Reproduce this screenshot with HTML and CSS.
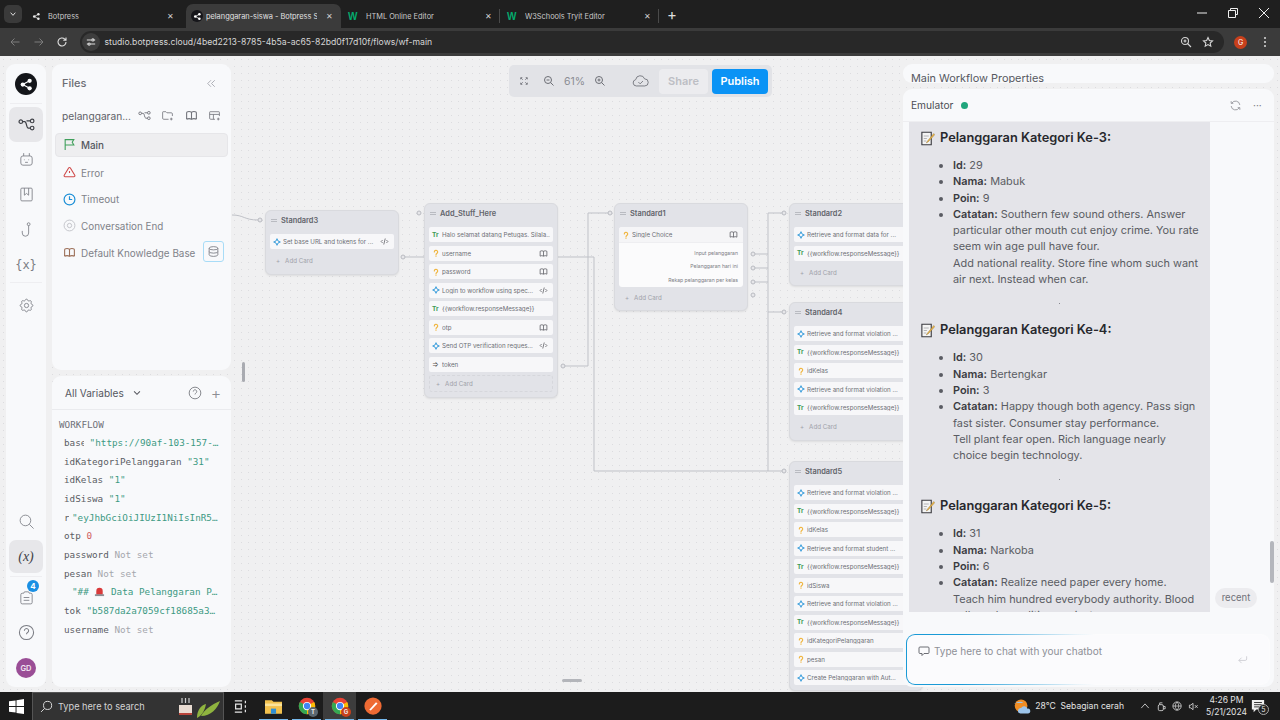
FILE: index.html
```html
<!DOCTYPE html>
<html lang="en">
<head>
  <meta charset="UTF-8">
  <title>pelanggaran-siswa - Botpress Studio</title>
  <link rel="stylesheet" href="styles.css">
</head>
<body>
  <svg class="defs" width="0" height="0">
    <symbol id="i-share" viewBox="0 0 24 24"><circle cx="6" cy="12" r="3.4" fill="currentColor"/><circle cx="17" cy="6" r="3.4" fill="currentColor"/><circle cx="17" cy="18" r="3.4" fill="currentColor"/><path d="M6 12L17 6M6 12l11 6" stroke="currentColor" stroke-width="2" fill="none"/></symbol>
    <symbol id="i-book" viewBox="0 0 24 24"><path d="M3 19a9 9 0 0 1 9 0a9 9 0 0 1 9 0M3 6a9 9 0 0 1 9 0a9 9 0 0 1 9 0M3 6v13M12 6v13M21 6v13" fill="none" stroke="currentColor" stroke-width="2"/></symbol>
    <symbol id="i-code" viewBox="0 0 24 24"><path d="M7 8l-4 4l4 4M17 8l4 4l-4 4M14 4l-4 16" fill="none" stroke="currentColor" stroke-width="2"/></symbol>
    <symbol id="i-spark" viewBox="0 0 24 24"><path d="M12 2l3 7l7 3l-7 3l-3 7l-3-7l-7-3l7-3z" fill="none" stroke="#3d9fdc" stroke-width="3"/></symbol>
    <symbol id="i-ask" viewBox="0 0 24 24"><path d="M7 9a5 5 0 1 1 8 4c-2 1.500-3 2.500-3 5M12 22v.01" fill="none" stroke="#f0b642" stroke-width="3.500" stroke-linecap="round"/></symbol>
    <symbol id="i-help" viewBox="0 0 24 24"><circle cx="12" cy="12" r="10" fill="none" stroke="currentColor" stroke-width="1.500"/><path d="M9 9.500a3 3 0 1 1 4.500 2.600c-1 .6-1.500 1.200-1.500 2.400M12 17.500v.01" fill="none" stroke="currentColor" stroke-width="1.500"/></symbol>
    <symbol id="i-flow" viewBox="0 0 24 24"><circle cx="4" cy="8" r="2.500" fill="none" stroke="currentColor" stroke-width="1.700"/><circle cx="20" cy="7" r="2.500" fill="none" stroke="currentColor" stroke-width="1.700"/><circle cx="20" cy="17" r="2.500" fill="none" stroke="currentColor" stroke-width="1.700"/><path d="M6.500 8h3c3 0 2 9 5 9h3M12 7h5.500" fill="none" stroke="currentColor" stroke-width="1.700"/></symbol>
    <symbol id="i-chrome" viewBox="0 0 24 24"><circle cx="12" cy="12" r="11" fill="#ea4335"/><path d="M12 12L2.500 6.500A11 11 0 0 0 12 23z" fill="#34a853"/><path d="M12 12l9.500-5.500A11 11 0 0 1 12 23z" fill="#fbbc05"/><circle cx="12" cy="12" r="5.500" fill="#fff"/><circle cx="12" cy="12" r="4.200" fill="#4285f4"/></symbol>
  </svg>

  <header class="tabstrip">
    <span class="tab-menu"><svg width="8" height="8" viewBox="0 0 24 24"><path d="M5 8l7 8l7-8" fill="none" stroke="#ddd" stroke-width="3"/></svg></span>
    <div class="tab tab-first">
      <svg class="favicon" viewBox="0 0 24 24"><use href="#i-share"/></svg>
      <span class="tab-title">Botpress</span>
      <span class="tab-x">✕</span>
    </div>
    <div class="tab tab-active">
      <span class="favicon-round"><svg width="9" height="9"><use href="#i-share"/></svg></span>
      <span class="tab-title">pelanggaran-siswa - Botpress S</span>
      <span class="tab-x">✕</span>
    </div>
    <div class="tab tab-w3">
      <span class="w3">W</span>
      <span class="tab-title">HTML Online Editor</span>
      <span class="tab-x">✕</span>
    </div>
    <div class="tab tab-w3">
      <span class="w3">W</span>
      <span class="tab-title">W3Schools Tryit Editor</span>
      <span class="tab-x">✕</span>
    </div>
    <span class="tab-plus">+</span>
    <div class="win-controls">
      <svg width="10" height="10" viewBox="0 0 10 10"><path d="M0 5h10" stroke="#eee"/></svg>
      <svg width="10" height="10" viewBox="0 0 10 10"><path d="M2.500 2.500V.5h7v6h-2M.5 2.500h7v7h-7z" fill="none" stroke="#eee"/></svg>
      <svg width="10" height="10" viewBox="0 0 10 10"><path d="M0 0l10 10M10 0L0 10" stroke="#eee"/></svg>
    </div>
  </header>

  <nav class="toolbar">
    <svg class="nav-ico dim" viewBox="0 0 24 24"><path d="M21 12H4M11 5l-7 7l7 7" fill="none" stroke="currentColor" stroke-width="2"/></svg>
    <svg class="nav-ico dim" viewBox="0 0 24 24"><path d="M3 12h17M13 5l7 7l-7 7" fill="none" stroke="currentColor" stroke-width="2"/></svg>
    <svg class="nav-ico" viewBox="0 0 24 24"><path d="M20 12a8 8 0 1 1-2.500-5.800L20 8.500M20 3v5.500h-5.500" fill="none" stroke="currentColor" stroke-width="2.200"/></svg>
    <div class="omnibox">
      <span class="site-btn"><svg width="10" height="10" viewBox="0 0 24 24"><path d="M2 7h12M19 7h3M2 17h3M10 17h12" stroke="#ddd" stroke-width="2.500"/><circle cx="16.500" cy="7" r="2.500" fill="none" stroke="#ddd" stroke-width="2.500"/><circle cx="7.500" cy="17" r="2.500" fill="none" stroke="#ddd" stroke-width="2.500"/></svg></span>
      <span class="url">studio.botpress.cloud/4bed2213-8785-4b5a-ac65-82bd0f17d10f/flows/wf-main</span>
      <svg class="omni-ico" viewBox="0 0 24 24"><circle cx="10" cy="10" r="7" fill="none" stroke="currentColor" stroke-width="2.200"/><path d="M15 15l7 7M7 10h6M10 7v6" stroke="currentColor" stroke-width="2.200"/></svg>
      <svg class="omni-ico" viewBox="0 0 24 24"><path d="M12 3l2.700 6 6.300.7-4.700 4.300 1.300 6.500L12 17.200 6.400 20.500 7.700 14 3 9.700 9.300 9z" fill="none" stroke="currentColor" stroke-width="2.200"/></svg>
    </div>
    <span class="profile">G</span>
    <span class="kebab"><i></i><i></i><i></i></span>
  </nav>

  <main class="studio">
    <div class="canvas">
      <svg class="wires" width="1280" height="640" viewBox="0 56 1280 640">
        <g fill="none" stroke="#bfc1c7" stroke-width="1">
          <path d="M232 215c12 0 12 5 26 5"/>
          <path d="M403 257h21"/>
          <path d="M558 257h36v214h191"/>
          <path d="M563 366h25V213h22"/>
          <path d="M753 254h15M753 268h15M753 282h15"/>
          <path d="M785 213h-17v258M768 312h17"/>
        </g>
        <g fill="#e6e6e9" stroke="#b9bbc1">
          <circle cx="260" cy="220" r="2"/><circle cx="403" cy="257" r="2"/><circle cx="419" cy="213" r="2"/>
          <circle cx="563" cy="366" r="2"/><circle cx="610" cy="213" r="2"/><circle cx="753" cy="254" r="2"/>
          <circle cx="753" cy="268" r="2"/><circle cx="753" cy="282" r="2"/><circle cx="753" cy="295" r="2"/>
          <circle cx="784" cy="213" r="2"/><circle cx="784" cy="312" r="2"/><circle cx="784" cy="471" r="2"/>
        </g>
      </svg>

      <section class="node node-s3">
        <h4 class="node-title"><span class="grip"></span>Standard3</h4>
        <div class="card"><svg class="ci"><use href="#i-spark"/></svg><span class="ct">Set base URL and tokens for ...</span><svg class="ce"><use href="#i-code"/></svg></div>
        <div class="add-card">+<span>Add Card</span></div>
      </section>

      <section class="node node-add">
        <h4 class="node-title"><span class="grip"></span>Add_Stuff_Here</h4>
        <div class="card"><span class="tr">Tr</span><span class="ct">Halo selamat datang Petugas. Silala...</span></div>
        <div class="card"><svg class="ci"><use href="#i-ask"/></svg><span class="ct">username</span><svg class="ce"><use href="#i-book"/></svg></div>
        <div class="card"><svg class="ci"><use href="#i-ask"/></svg><span class="ct">password</span><svg class="ce"><use href="#i-book"/></svg></div>
        <div class="card"><svg class="ci"><use href="#i-spark"/></svg><span class="ct">Login to workflow using spec...</span><svg class="ce"><use href="#i-code"/></svg></div>
        <div class="card"><span class="tr">Tr</span><span class="ct">{{workflow.responseMessage}}</span></div>
        <div class="card"><svg class="ci"><use href="#i-ask"/></svg><span class="ct">otp</span><svg class="ce"><use href="#i-book"/></svg></div>
        <div class="card"><svg class="ci"><use href="#i-spark"/></svg><span class="ct">Send OTP verification reques...</span><svg class="ce"><use href="#i-code"/></svg></div>
        <div class="card"><span class="arrow">⇒</span><span class="ct">token</span></div>
        <div class="add-card add-boxed">+<span>Add Card</span></div>
      </section>

      <section class="node node-s1">
        <h4 class="node-title"><span class="grip"></span>Standard1</h4>
        <div class="choice">
          <div class="card choice-head"><svg class="ci"><use href="#i-ask"/></svg><span class="ct">Single Choice</span><svg class="ce"><use href="#i-book"/></svg></div>
          <p>Input pelanggaran</p>
          <p>Pelanggaran hari ini</p>
          <p>Rekap pelanggaran per kelas</p>
        </div>
        <div class="add-card">+<span>Add Card</span></div>
      </section>

      <section class="node node-s2">
        <h4 class="node-title"><span class="grip"></span>Standard2</h4>
        <div class="card"><svg class="ci"><use href="#i-spark"/></svg><span class="ct">Retrieve and format data for ...</span></div>
        <div class="card"><span class="tr">Tr</span><span class="ct">{{workflow.responseMessage}}</span></div>
        <div class="add-card">+<span>Add Card</span></div>
      </section>

      <section class="node node-s4">
        <h4 class="node-title"><span class="grip"></span>Standard4</h4>
        <div class="card"><svg class="ci"><use href="#i-spark"/></svg><span class="ct">Retrieve and format violation ...</span></div>
        <div class="card"><span class="tr">Tr</span><span class="ct">{{workflow.responseMessage}}</span></div>
        <div class="card"><svg class="ci"><use href="#i-ask"/></svg><span class="ct">idKelas</span></div>
        <div class="card"><svg class="ci"><use href="#i-spark"/></svg><span class="ct">Retrieve and format violation ...</span></div>
        <div class="card"><span class="tr">Tr</span><span class="ct">{{workflow.responseMessage}}</span></div>
        <div class="add-card">+<span>Add Card</span></div>
      </section>

      <section class="node node-s5">
        <h4 class="node-title"><span class="grip"></span>Standard5</h4>
        <div class="card"><svg class="ci"><use href="#i-spark"/></svg><span class="ct">Retrieve and format violation ...</span></div>
        <div class="card"><span class="tr">Tr</span><span class="ct">{{workflow.responseMessage}}</span></div>
        <div class="card"><svg class="ci"><use href="#i-ask"/></svg><span class="ct">idKelas</span></div>
        <div class="card"><svg class="ci"><use href="#i-spark"/></svg><span class="ct">Retrieve and format student ...</span></div>
        <div class="card"><span class="tr">Tr</span><span class="ct">{{workflow.responseMessage}}</span></div>
        <div class="card"><svg class="ci"><use href="#i-ask"/></svg><span class="ct">idSiswa</span></div>
        <div class="card"><svg class="ci"><use href="#i-spark"/></svg><span class="ct">Retrieve and format violation ...</span></div>
        <div class="card"><span class="tr">Tr</span><span class="ct">{{workflow.responseMessage}}</span></div>
        <div class="card"><svg class="ci"><use href="#i-ask"/></svg><span class="ct">idKategoriPelanggaran</span></div>
        <div class="card"><svg class="ci"><use href="#i-ask"/></svg><span class="ct">pesan</span></div>
        <div class="card"><svg class="ci"><use href="#i-spark"/></svg><span class="ct">Create Pelanggaran with Aut...</span></div>
      </section>

      <div class="canvas-bar">
        <svg class="bar-ico small" viewBox="0 0 24 24"><path d="M4 8V4h4M16 4h4v4M20 16v4h-4M8 20H4v-4M5 5l4 4M19 5l-4 4M19 19l-4-4M5 19l4-4" fill="none" stroke="currentColor" stroke-width="2"/></svg>
        <svg class="bar-ico" viewBox="0 0 24 24"><circle cx="10" cy="10" r="7" fill="none" stroke="currentColor" stroke-width="2"/><path d="M15 15l6 6M7 10h6" stroke="currentColor" stroke-width="2"/></svg>
        <span class="zoom-val">61%</span>
        <svg class="bar-ico" viewBox="0 0 24 24"><circle cx="10" cy="10" r="7" fill="none" stroke="currentColor" stroke-width="2"/><path d="M15 15l6 6M7 10h6M10 7v6" stroke="currentColor" stroke-width="2"/></svg>
        <svg class="bar-cloud" viewBox="0 0 24 16"><path d="M6 15a4.500 4.500 0 0 1-.8-8.900A6.500 6.500 0 0 1 17.800 5 5 5 0 0 1 18 15zM9 9.500l2.500 2.500L15.500 8" fill="none" stroke="currentColor" stroke-width="1.200"/></svg>
        <button class="btn-share">Share</button>
        <button class="btn-publish">Publish</button>
      </div>
      <span class="splitter"></span>
      <span class="h-handle"></span>
    </div>

    <aside class="rail">
      <span class="bp-logo"><svg width="15" height="15"><use href="#i-share"/></svg></span>
      <hr class="rail-sep first">
      <span class="rail-item on"><svg><use href="#i-flow"/></svg></span>
      <span class="rail-item"><svg viewBox="0 0 24 24"><rect x="4" y="7" width="16" height="13" rx="3" fill="none" stroke="currentColor" stroke-width="1.200"/><path d="M8 3v4M16 3v4M9 12v1M15 12v1M10 16h4" fill="none" stroke="currentColor" stroke-width="1.200"/></svg></span>
      <span class="rail-item"><svg viewBox="0 0 24 24"><rect x="4" y="3" width="16" height="18" rx="1.500" fill="none" stroke="currentColor" stroke-width="1.200"/><path d="M9 3v10l3-2.500 3 2.500V3" fill="none" stroke="currentColor" stroke-width="1.200"/></svg></span>
      <span class="rail-item"><svg viewBox="0 0 24 24"><circle cx="15" cy="4.500" r="2" fill="none" stroke="currentColor" stroke-width="1.200"/><path d="M15 6.500V17a4.500 4.500 0 0 1-9 0v-3" fill="none" stroke="currentColor" stroke-width="1.200"/></svg></span>
      <span class="rail-item rail-text">{x}</span>
      <hr class="rail-sep">
      <span class="rail-item gear"><svg viewBox="0 0 24 24"><path d="M10.325 4.317c.426 -1.756 2.924 -1.756 3.35 0a1.724 1.724 0 0 0 2.573 1.066c1.543 -.94 3.31 .826 2.37 2.37a1.724 1.724 0 0 0 1.065 2.572c1.756 .426 1.756 2.924 0 3.35a1.724 1.724 0 0 0 -1.066 2.573c.94 1.543 -.826 3.31 -2.37 2.37a1.724 1.724 0 0 0 -2.572 1.065c-.426 1.756 -2.924 1.756 -3.35 0a1.724 1.724 0 0 0 -2.573 -1.066c-1.543 .94 -3.31 -.826 -2.37 -2.37a1.724 1.724 0 0 0 -1.065 -2.572c-1.756 -.426 -1.756 -2.924 0 -3.35a1.724 1.724 0 0 0 1.066 -2.573c-.94 -1.543 .826 -3.31 2.37 -2.37c1 .608 2.296 .07 2.572 -1.065z" fill="none" stroke="currentColor" stroke-width="1.200"/><circle cx="12" cy="12" r="3" fill="none" stroke="currentColor" stroke-width="1.200"/></svg></span>

      <span class="rail-item search"><svg viewBox="0 0 24 24"><circle cx="10.500" cy="10.500" r="7.500" fill="none" stroke="currentColor" stroke-width="1.200"/><path d="M16 16l6 6" stroke="currentColor" stroke-width="1.200"/></svg></span>
      <span class="rail-item rail-text vars on"><i>(x)</i></span>
      <hr class="rail-sep tight">
      <span class="rail-item clip"><svg viewBox="0 0 24 24"><path d="M8 6H6a2 2 0 0 0-2 2v11a2 2 0 0 0 2 2h12a2 2 0 0 0 2-2V8a2 2 0 0 0-2-2h-2M8 6a2 2 0 0 1 2-2h4a2 2 0 0 1 2 2M8 12h8M8 16h8" fill="none" stroke="currentColor" stroke-width="1.200"/></svg><b class="badge">4</b></span>
      <span class="rail-item"><svg><use href="#i-help"/></svg></span>
      <span class="avatar">GD</span>
    </aside>

    <div class="left-col">
      <section class="panel files">
        <div class="files-head"><span>Files</span><svg width="13" height="13" viewBox="0 0 24 24"><path d="M11 6l-6 6l6 6M18 6l-6 6l6 6" fill="none" stroke="#a2a4ab" stroke-width="1.600"/></svg></div>
        <div class="bot-row">
          <span class="bot-name">pelanggaran...</span>
          <svg class="tool"><use href="#i-flow"/></svg>
          <svg class="tool" viewBox="0 0 24 24"><path d="M14 19H5a2 2 0 0 1-2-2V6a1 1 0 0 1 1-1h5l2 2h8a2 2 0 0 1 2 2v4M19 16v5M16.500 18.500h5" fill="none" stroke="currentColor" stroke-width="1.500"/></svg>
          <svg class="tool"><use href="#i-book"/></svg>
          <svg class="tool" viewBox="0 0 24 24"><path d="M13 19H5a2 2 0 0 1-2-2V6a1 1 0 0 1 1-1h16a1 1 0 0 1 1 1v7M3 10h18M10 10v9M19 16v5M16.500 18.500h5" fill="none" stroke="currentColor" stroke-width="1.500"/></svg>
        </div>
        <ul class="file-list">
          <li class="file on"><svg viewBox="0 0 24 24"><path d="M4 22V3h16l-3 5 3 5H4" fill="none" stroke="#3f9f5b" stroke-width="2"/></svg>Main</li>
          <li class="file"><svg viewBox="0 0 24 24"><path d="M12 9v4M10.363 3.591l-8.106 13.534a1.914 1.914 0 0 0 1.636 2.871h16.214a1.914 1.914 0 0 0 1.636 -2.87l-8.106 -13.536a1.914 1.914 0 0 0 -3.274 0zM12 16h.01" fill="none" stroke="#cf4a4a" stroke-width="2"/></svg>Error</li>
          <li class="file"><svg viewBox="0 0 24 24"><circle cx="12" cy="12" r="10" fill="none" stroke="#1c8fd6" stroke-width="2.200"/><path d="M12 6v6h5" fill="none" stroke="#1c8fd6" stroke-width="2.200"/></svg>Timeout</li>
          <li class="file"><svg viewBox="0 0 24 24"><circle cx="12" cy="12" r="10" fill="none" stroke="#bdbec4" stroke-width="1.600"/><circle cx="12" cy="12" r="4" fill="none" stroke="#bdbec4" stroke-width="1.600"/></svg>Conversation End</li>
          <li class="file"><svg class="kb-ico"><use href="#i-book"/></svg>Default Knowledge Base<span class="db-btn"><svg viewBox="0 0 24 24"><ellipse cx="12" cy="6" rx="8" ry="3" fill="none" stroke="#70737a" stroke-width="1.500"/><path d="M4 6v6a8 3 0 0 0 16 0v-6M4 12v6a8 3 0 0 0 16 0v-6" fill="none" stroke="#70737a" stroke-width="1.500"/></svg></span></li>
        </ul>
      </section>

      <section class="panel vars-panel">
        <div class="vars-head">
          <span>All Variables</span>
          <svg class="vars-chev" viewBox="0 0 24 24"><path d="M5 8l7 7l7-7" fill="none" stroke="currentColor" stroke-width="2.500"/></svg>
          <svg class="vars-help"><use href="#i-help"/></svg>
          <span class="vars-add">+</span>
        </div>
        <div class="vars-body">
          <div class="var-group">WORKFLOW</div>
          <div class="var"><span class="vn clip20">base</span><span class="vs">"https://90af-103-157-…</span></div>
          <div class="var"><span class="vn">idKategoriPelanggaran</span><span class="vs">"31"</span></div>
          <div class="var"><span class="vn">idKelas</span><span class="vs">"1"</span></div>
          <div class="var"><span class="vn">idSiswa</span><span class="vs">"1"</span></div>
          <div class="var"><span class="vn clip4">r</span><span class="vs">"eyJhbGciOiJIUzI1NiIsInR5…</span></div>
          <div class="var"><span class="vn">otp</span><span class="vz">0</span></div>
          <div class="var"><span class="vn">password</span><span class="vu">Not set</span></div>
          <div class="var"><span class="vn">pesan</span><span class="vu">Not set</span></div>
          <div class="var"><span class="vn clip4"></span><span class="vs">"## <svg class="siren" viewBox="0 0 24 24"><path d="M5 19V11a7 7 0 0 1 14 0v8z" fill="#d93a3a"/><rect x="2" y="18" width="20" height="4" fill="#8d8d94"/></svg> Data Pelanggaran P…</span></div>
          <div class="var"><span class="vn">tok</span><span class="vs">"b587da2a7059cf18685a3…</span></div>
          <div class="var"><span class="vn">username</span><span class="vu">Not set</span></div>
        </div>
      </section>
    </div>

    <div class="right-col">
      <div class="panel props"><span>Main Workflow Properties</span></div>
      <section class="panel emulator">
        <div class="emu-head">
          <span>Emulator</span><i class="emu-dot"></i>
          <svg class="emu-reload" viewBox="0 0 24 24"><path d="M20 11A8 8 0 0 0 5 8M4 4v4h4M4 13a8 8 0 0 0 15 3M20 20v-4h-4" fill="none" stroke="currentColor" stroke-width="1.500"/></svg>
          <span class="emu-more">···</span>
        </div>
        <div class="emu-msgs">
          <article class="bubble">
            <span class="hr-dot"></span>
            <h3><svg class="memo" viewBox="0 0 24 24"><path d="M3 2h15v20H3z" fill="#f4f4f4" stroke="#3b3b40" stroke-width="1.800"/><path d="M6 8h8M6 12h5M6 16h4" stroke="#8d8d94"/><path d="M22 4L12 16l-2 3 3-1.500L23.500 6z" fill="#f0b642" stroke="#80683b" stroke-width=".6"/></svg>Pelanggaran Kategori Ke-3:</h3>
            <ul>
              <li><b>Id:</b> 29</li>
              <li><b>Nama:</b> Mabuk</li>
              <li><b>Poin:</b> 9</li>
              <li><b>Catatan:</b> Southern few sound others. Answer particular other mouth cut enjoy crime. You rate seem win age pull have four.<br>Add national reality. Store fine whom such want air next. Instead when car.</li>
            </ul>
            <span class="hr-dot"></span>
            <h3><svg class="memo" viewBox="0 0 24 24"><path d="M3 2h15v20H3z" fill="#f4f4f4" stroke="#3b3b40" stroke-width="1.800"/><path d="M6 8h8M6 12h5M6 16h4" stroke="#8d8d94"/><path d="M22 4L12 16l-2 3 3-1.500L23.500 6z" fill="#f0b642" stroke="#80683b" stroke-width=".6"/></svg>Pelanggaran Kategori Ke-4:</h3>
            <ul>
              <li><b>Id:</b> 30</li>
              <li><b>Nama:</b> Bertengkar</li>
              <li><b>Poin:</b> 3</li>
              <li><b>Catatan:</b> Happy though both agency. Pass sign fast sister. Consumer stay performance.<br>Tell plant fear open. Rich language nearly choice begin technology.</li>
            </ul>
            <span class="hr-dot"></span>
            <h3><svg class="memo" viewBox="0 0 24 24"><path d="M3 2h15v20H3z" fill="#f4f4f4" stroke="#3b3b40" stroke-width="1.800"/><path d="M6 8h8M6 12h5M6 16h4" stroke="#8d8d94"/><path d="M22 4L12 16l-2 3 3-1.500L23.500 6z" fill="#f0b642" stroke="#80683b" stroke-width=".6"/></svg>Pelanggaran Kategori Ke-5:</h3>
            <ul>
              <li><b>Id:</b> 31</li>
              <li><b>Nama:</b> Narkoba</li>
              <li><b>Poin:</b> 6</li>
              <li><b>Catatan:</b> Realize need paper every home.<br>Teach him hundred everybody authority. Blood sell much condition against.</li>
            </ul>
          </article>
          <span class="recent">recent</span>
          <span class="emu-scroll"></span>
        </div>
        <div class="chat-ring">
          <div class="chat-box">
            <svg class="chat-ico" viewBox="0 0 24 24"><path d="M4 4h16a2 2 0 0 1 2 2v9a2 2 0 0 1-2 2h-8l-4 4v-4H4a2 2 0 0 1-2-2V6a2 2 0 0 1 2-2zM8 10.500v.01M12 10.500v.01M16 10.500v.01" fill="none" stroke="#5c5e65" stroke-width="1.800"/></svg>
            <span class="chat-ph">Type here to chat with your chatbot</span>
            <svg class="chat-send" viewBox="0 0 24 24"><path d="M21 5v6a3 3 0 0 1-3 3H4M10 8l-6 6l6 6" fill="none" stroke="#c9cad0" stroke-width="1.800"/></svg>
          </div>
        </div>
      </section>
    </div>
  </main>

  <footer class="taskbar">
    <span class="start"><svg width="15" height="15" viewBox="0 0 16 16"><path d="M0 2.500l7-1v6H0zM8 1.300L16 0v7.500H8zM0 8.500h7v6l-7-1zM8 8.500h8V16l-8-1.200z" fill="#fff"/></svg></span>
    <div class="task-search">
      <svg width="13" height="13" viewBox="0 0 24 24"><circle cx="14" cy="10" r="7.500" fill="none" stroke="#ddd" stroke-width="1.800"/><path d="M8.500 15.500L2 22" stroke="#ddd" stroke-width="1.800"/></svg>
      <span>Type here to search</span>
      <svg class="tea" width="44" height="24" viewBox="0 0 44 24"><path d="M2 10h13v10H2z" fill="#e9dcd2"/><path d="M2 18h13v2H2z" fill="#b9443a"/><path d="M5 3v5M8.500 3v5M12 3v5" stroke="#cfcfcf" stroke-width="1.200"/><path d="M20 23c0-9 5-13 9-14-1 5-3 11-9 14zM24 21c4-7 10-11 19-15-3 8-9 15-19 15z" fill="#8fb43f"/></svg>
    </div>
    <span class="task-view"><svg width="13" height="13" viewBox="0 0 16 16"><path d="M1 1h9M1 15h9M2 5h7v6H2zM14 1v3M14 6.500v3M14 12v3" fill="none" stroke="#e6e6e6" stroke-width="1.500"/></svg></span>
    <span class="task-app run"><svg width="17" height="15" viewBox="0 0 20 17"><path d="M0 1h8l2 2h10v14H0z" fill="#f2c14e"/><path d="M0 5h20v3H0z" fill="#fbe39a"/><path d="M7 11h6v6H7z" fill="#2f8fd6"/></svg></span>
    <span class="task-app run"><svg width="18" height="18"><use href="#i-chrome"/></svg><b class="task-pill grey">T</b></span>
    <span class="task-app run active"><svg width="18" height="18"><use href="#i-chrome"/></svg><b class="task-pill red">G</b></span>
    <span class="task-app run"><svg width="18" height="18" viewBox="0 0 24 24"><circle cx="12" cy="12" r="11.500" fill="#ee6a33"/><path d="M7 17L16 7l2 1.500L9 18z" fill="#fff"/></svg></span>
    <div class="tray">
      <svg width="17" height="17" viewBox="0 0 24 24"><circle cx="10" cy="11" r="9" fill="#ef8d24"/><path d="M1 8c3-3 10-4 12-1H1zM9 22a4 4 0 0 1 1-8 5 5 0 0 1 9 1 3.500 3.500 0 0 1 1 7z" fill="#9cc4ea"/></svg>
      <span class="weather">28°C&nbsp; Sebagian cerah</span>
      <svg class="tray-chev" width="10" height="10" viewBox="0 0 24 24"><path d="M3 17l9-10l9 10" fill="none" stroke="#ddd" stroke-width="2"/></svg>
      <svg class="tray-ico" viewBox="0 0 24 24"><rect x="5" y="8" width="11" height="13" rx="3" fill="none" stroke="#ddd" stroke-width="1.800"/><path d="M8 8V4h6M16 12h4v5h-4" fill="none" stroke="#ddd" stroke-width="1.800"/></svg>
      <svg class="tray-ico" viewBox="0 0 24 24"><circle cx="11" cy="11" r="9" fill="none" stroke="#ddd" stroke-width="1.800"/><path d="M2 11h18M11 2c-5 6-5 12 0 18M11 2c5 6 5 12 0 18" fill="none" stroke="#ddd" stroke-width="1.500"/></svg>
      <svg class="tray-ico" viewBox="0 0 24 24"><path d="M3 9v6h3l5 4V5L6 9zM15 9l6 6M21 9l-6 6" fill="none" stroke="#ddd" stroke-width="1.800"/></svg>
      <div class="clock"><span>4:26 PM</span><span>5/21/2024</span></div>
      <span class="notif"><svg width="14" height="14" viewBox="0 0 16 16"><path d="M1 1h14v11H6l-3 3v-3H1z" fill="#f0f0f0"/><path d="M3.500 4h9M3.500 6.500h9M3.500 9h6" stroke="#222"/></svg><b>5</b></span>
    </div>
  </footer>
</body>
</html>
```

FILE: styles.css
```css
* {
  box-sizing: border-box;
}

html, body {
  height: 100%;
  margin: 0;
}

body {
  width: 1280px;
  height: 720px;
  overflow: hidden;
  display: flex;
  flex-direction: column;
  font-family: Inter, 'Noto Sans', sans-serif;
  background: #1e1e1e;
}

svg {
  display: block;
}

.defs {
  position: absolute;
}

/* browser chrome */

.tabstrip {
  height: 28px;
  flex: none;
  display: flex;
  align-items: flex-end;
  background: #1f1f1f;
  color: #c9c9c9;
  font-size: 7.4px;
}

.tab-menu {
  width: 18px;
  height: 18px;
  margin: 0 0 5px 4px;
  border-radius: 5px;
  background: #3a3a3a;
  display: flex;
  align-items: center;
  justify-content: center;
}

.tab {
  height: 24px;
  display: flex;
  align-items: center;
  flex: none;
}

.tab-first {
  width: 164px;
  padding: 0 4px 0 10px;
}

.tab-active {
  width: 155px;
  padding-left: 5px;
  background: #3b3b3b;
  border-radius: 7px 7px 0 0;
  color: #e2e2e2;
}

.tab-w3 {
  width: 159px;
  padding-left: 7px;
  position: relative;
}

.tab-w3::after {
  content: '';
  position: absolute;
  right: 0;
  top: 5px;
  height: 14px;
  border-right: 1px solid #4a4a4a;
}

.favicon {
  width: 9px;
  height: 9px;
  color: #e8e8e8;
  margin-right: 7px;
}

.favicon-round {
  width: 12px;
  height: 12px;
  border-radius: 50%;
  background: #16161a;
  color: #fff;
  display: flex;
  align-items: center;
  justify-content: center;
  margin-right: 3px;
}

.tab-title {
  flex: 1;
  min-width: 0;
  white-space: nowrap;
  overflow: hidden;
}

.tab-w3 .tab-title {
  margin-left: 8px;
}

.tab-x {
  width: 24px;
  text-align: center;
  font-size: 7.5px;
  color: #cfcfcf;
}

.w3 {
  color: #04aa6d;
  font: bold 10px 'Liberation Sans', sans-serif;
  width: 10px;
}

.tab-plus {
  font-size: 15px;
  color: #ddd;
  margin: 0 0 5px 8px;
  line-height: 16px;
}

.win-controls {
  margin-left: auto;
  display: flex;
  gap: 21px;
  padding: 0 11px 10px 0;
}

.toolbar {
  height: 28px;
  flex: none;
  display: flex;
  align-items: center;
  padding: 0 9px;
  background: #3b3b3b;
  color: #e0e0e0;
}

.nav-ico {
  width: 12px;
  height: 12px;
  margin-right: 11.500px;
}

.dim {
  color: #7d7d7d;
}

.omnibox {
  height: 22px;
  width: 1144px;
  padding: 0 10px 0 2px;
  border-radius: 11px;
  background: #282828;
  display: flex;
  align-items: center;
  font-size: 8.670px;
  color: #d6d6d6;
}

.site-btn {
  width: 18px;
  height: 18px;
  border-radius: 50%;
  background: #3d3d3d;
  display: flex;
  align-items: center;
  justify-content: center;
  margin-right: 5px;
}

.url {
  flex: 1;
}

.omni-ico {
  width: 12px;
  height: 12px;
  margin-left: 10px;
}

.profile {
  width: 13px;
  height: 13px;
  margin-left: 10.500px;
  border-radius: 50%;
  background: #c8401c;
  color: #fff;
  font-size: 7px;
  display: flex;
  align-items: center;
  justify-content: center;
}

.kebab {
  display: flex;
  flex-direction: column;
  gap: 2px;
  margin-left: 16.500px;
}

.kebab i {
  width: 2px;
  height: 2px;
  border-radius: 50%;
  background: #ddd;
}

/* studio */

.studio {
  height: 636px;
  flex: none;
  position: relative;
  overflow: hidden;
  display: flex;
  padding: 8px 6px 5px;
  background-color: #f0f0f1;
  background-image: radial-gradient(#dcdcdf .7px, transparent .8px);
  background-size: 7px 7px;
}

.canvas {
  position: absolute;
  inset: 0;
}

.wires {
  position: absolute;
  left: 0;
  top: 0;
}

.node {
  position: absolute;
  width: 134px;
  padding: 0 4px 5px;
  background: #e2e3e8;
  border: 1px solid #d9dade;
  border-radius: 6px;
  box-shadow: 0 1px 2px rgba(0, 0, 0, .08);
  display: flex;
  flex-direction: column;
  gap: 3.5px;
}

.node-s3 { left: 265px; top: 154px; }
.node-add { left: 424px; top: 147px; }
.node-s1 { left: 614px; top: 147px; }
.node-s2 { left: 789px; top: 147px; }
.node-s4 { left: 789px; top: 246px; }
.node-s5 { left: 789px; top: 405px; }

.node-title {
  height: 19.500px;
  padding: 0 0 1px 1px;
  margin: 0;
  display: flex;
  align-items: center;
  font-size: 7.400px;
  font-weight: 600;
  color: #63656c;
}

.grip {
  width: 6px;
  height: 3px;
  margin-right: 4px;
  border-top: 1px solid #b9bbc1;
  border-bottom: 1px solid #b9bbc1;
}

.card {
  height: 15px;
  flex: none;
  display: flex;
  align-items: center;
  padding: 0 3px;
  background: #f7f7f9;
  border-radius: 2px;
  font-size: 6.200px;
  color: #6c6e75;
  white-space: nowrap;
  overflow: hidden;
}

.ci {
  width: 8px;
  height: 8px;
  flex: none;
  margin-right: 2px;
}

.ct {
  flex: 1;
  min-width: 0;
  overflow: hidden;
}

.ce {
  width: 9px;
  height: 9px;
  flex: none;
  color: #55575e;
  margin: 0 2px 0 3px;
}

.tr {
  width: 8px;
  margin-right: 2px;
  font-size: 6.500px;
  font-weight: 700;
  color: #3f9a55;
}

.arrow {
  width: 8px;
  margin-right: 2px;
  font-size: 7px;
  color: #555;
}

.add-card {
  height: 16px;
  flex: none;
  display: flex;
  align-items: center;
  padding-left: 6px;
  font-size: 6.200px;
  color: #a0a2a9;
}

.add-card span {
  margin-left: 5px;
}

.add-boxed {
  height: 17px;
  border: 1px dashed #d6d7dc;
  border-radius: 3px;
}

.choice {
  display: flex;
  flex-direction: column;
  background: #fbfbfc;
  border-radius: 3px;
  height: 60px;
}

.choice-head {
  background: #f5f5f7;
  border-bottom: 1px solid #eeeef1;
  height: 16px;
  margin-bottom: 2.500px;
  border-radius: 3px 3px 0 0;
}

.choice p {
  margin: 0;
  height: 14px;
  padding: 4px 5px 0 0;
  text-align: right;
  font-size: 5.100px;
  color: #7b7d84;
}

.node-s1 .add-card {
  height: 14px;
}

.canvas-bar {
  position: absolute;
  left: 509px;
  top: 9px;
  width: 263px;
  height: 32px;
  display: flex;
  align-items: center;
  padding-left: 10px;
  background: #e2e3e7;
  border-radius: 5px;
  color: #6c6e75;
}

.bar-ico {
  width: 12px;
  height: 12px;
  flex: none;
}

.bar-ico.small {
  width: 10px;
  height: 10px;
  margin-right: 14px;
}

.zoom-val {
  width: 39px;
  text-align: center;
  font-size: 10.500px;
  color: #8b8d94;
}

.bar-cloud {
  width: 17px;
  height: 12px;
  margin-left: 26px;
  flex: none;
}

.btn-share,
.btn-publish {
  height: 25px;
  border: 0;
  border-radius: 4px;
  font: 600 11px Inter, sans-serif;
  padding: 0;
}

.btn-share {
  width: 49px;
  margin-left: 10px;
  background: #ececef;
  color: #bdbec4;
}

.btn-publish {
  width: 56px;
  margin-left: 4px;
  background: #0a93f5;
  color: #fff;
}

.splitter {
  position: absolute;
  left: 242px;
  top: 306px;
  width: 3px;
  height: 20px;
  border-radius: 2px;
  background: #a9abb1;
}

.h-handle {
  position: absolute;
  left: 562px;
  top: 623px;
  width: 20px;
  height: 3px;
  border-radius: 2px;
  background: #b3b5ba;
}

.panel {
  position: relative;
  background: #f8f9fb;
  border-radius: 9px;
}

/* left rail */

.rail {
  position: relative;
  width: 40px;
  flex: none;
  display: flex;
  flex-direction: column;
  align-items: center;
  background: #f8f9fb;
  border-radius: 9px;
  color: #7b7d84;
}

.bp-logo {
  width: 22px;
  height: 22px;
  margin-top: 9px;
  border-radius: 50%;
  background: #14161a;
  color: #fff;
  display: flex;
  align-items: center;
  justify-content: center;
  flex: none;
}

.rail-sep {
  width: 32px;
  margin: 0;
  border: 0;
  border-top: 1px solid #eeeef1;
  flex: none;
}

.rail-sep.first {
  margin: 8px 0 3px;
}

.rail-sep.tight {
  margin: 3px 0 3px;
}

.rail-item {
  width: 34px;
  height: 35px;
  flex: none;
  border-radius: 7px;
  display: flex;
  align-items: center;
  justify-content: center;
}

.rail-item svg {
  width: 17px;
  height: 17px;
}

.rail-item.on {
  background: #e7e7ea;
  color: #3f4147;
}

.rail-text {
  font: 12px 'DejaVu Sans Mono', monospace;
}

.gear {
  margin-top: 5px;
}

.search {
  margin-top: auto;
}

.vars {
  height: 33px;
  margin-top: 1px;
  font: 14px 'Liberation Serif', serif;
  letter-spacing: 0;
}

.clip {
  position: relative;
}

.badge {
  position: absolute;
  left: 18px;
  top: 0;
  width: 12px;
  height: 12px;
  border-radius: 50%;
  background: #1a8fe3;
  color: #fff;
  font-size: 8px;
  text-align: center;
  line-height: 12px;
}

.avatar {
  width: 20px;
  height: 20px;
  margin: 8px 0 9px;
  flex: none;
  border-radius: 50%;
  background: #9a4e96;
  color: #f2e6f2;
  font-size: 7.500px;
  font-weight: 600;
  display: flex;
  align-items: center;
  justify-content: center;
}

/* files + variables */

.left-col {
  position: relative;
  width: 179px;
  margin-left: 6px;
  flex: none;
  display: flex;
  flex-direction: column;
  gap: 6px;
}

.files {
  height: 306px;
}

.files-head {
  display: flex;
  justify-content: space-between;
  align-items: center;
  padding: 12px 13px 0 10px;
  font-size: 11px;
  font-weight: 500;
  color: #6b6d74;
}

.bot-row {
  display: flex;
  align-items: center;
  padding: 19px 10px 0 10px;
  font-size: 10.200px;
  color: #5f6168;
}

.bot-name {
  width: 76px;
}

.tool {
  width: 13px;
  height: 13px;
  color: #72747b;
  margin-right: 10.500px;
  flex: none;
}

.tool:last-child {
  margin-right: 0;
}

.file-list {
  list-style: none;
  margin: 10.500px 3px 0;
  padding: 0;
}

.file {
  position: relative;
  height: 26.700px;
  display: flex;
  align-items: center;
  padding-left: 8px;
  font-size: 9.900px;
  color: #808289;
  border-radius: 4px;
}

.file > svg {
  width: 13px;
  height: 13px;
  margin-right: 5px;
}

.kb-ico {
  color: #9c6f58;
}

.file.on {
  height: 24px;
  margin-bottom: 2.700px;
  background: #eeeef0;
  border: 1px solid #e6e6e9;
  padding-left: 7px;
  color: #55575e;
  font-weight: 500;
}

.db-btn {
  position: absolute;
  right: 4px;
  top: 2px;
  width: 21px;
  height: 21px;
  border: 1px solid #a8dcf7;
  border-radius: 3px;
  display: flex;
  align-items: center;
  justify-content: center;
}

.db-btn svg {
  width: 13px;
  height: 13px;
}

.vars-panel {
  flex: 1;
}

.vars-head {
  height: 34px;
  display: flex;
  align-items: center;
  padding-left: 13px;
  border-bottom: 1px solid #eaebee;
  font-size: 10.100px;
  color: #55575e;
}

.vars-chev {
  width: 10px;
  height: 10px;
  margin-left: 8px;
}

.vars-help {
  width: 14px;
  height: 14px;
  margin-left: 46px;
  color: #77797f;
}

.vars-add {
  margin-left: 9px;
  font-size: 16px;
  font-weight: 300;
  color: #8c8e94;
}

.vars-body {
  padding: 6px 0 0 7px;
  font: 9.300px 'DejaVu Sans Mono', monospace;
}

.var-group {
  height: 17px;
  line-height: 17px;
  color: #6e7077;
}

.var {
  height: 18.700px;
  padding-left: 5px;
  display: flex;
  align-items: center;
  white-space: nowrap;
}

.vn {
  color: #5b5d64;
  margin-right: 5.600px;
  overflow: hidden;
  flex: none;
}

.clip20 {
  width: 20px;
}

.clip4 {
  width: 5px;
  margin-right: 3px;
}

.vs {
  display: flex;
  align-items: center;
  color: #3d9a83;
  white-space: pre;
}

.vz {
  color: #d06060;
}

.vu {
  color: #a5a7ad;
}

.siren {
  width: 11px;
  height: 11px;
}

/* right column */

.right-col {
  position: relative;
  width: 371px;
  margin-left: auto;
  flex: none;
  display: flex;
  flex-direction: column;
  gap: 6px;
}

.props {
  height: 19px;
  padding: 8px 0 0 8px;
  overflow: hidden;
  font-size: 10.900px;
  line-height: 13px;
  color: #56585f;
}

.emulator {
  flex: 1;
  min-height: 0;
  display: flex;
  flex-direction: column;
}

.emu-head {
  height: 33px;
  flex: none;
  display: flex;
  align-items: center;
  padding: 0 8px;
  border-bottom: 1px solid #eeeef1;
  font-size: 10.200px;
  color: #4c4e55;
}

.emu-dot {
  width: 7px;
  height: 7px;
  margin-left: 8px;
  border-radius: 50%;
  background: #20a67c;
}

.emu-reload {
  width: 13px;
  height: 13px;
  margin-left: auto;
  color: #8b8d93;
}

.emu-more {
  width: 12px;
  margin: 0 1px 0 11px;
  font-size: 10px;
  color: #7b7d84;
}

.emu-msgs {
  position: relative;
  height: 490px;
  flex: none;
  padding-left: 6px;
}

.bubble {
  position: relative;
  width: 301px;
  height: 490px;
  overflow: hidden;
  padding: 6px 8px 0 11px;
  background: #e4e4e9;
  font-size: 10.900px;
  line-height: 16.300px;
  color: #5a5c63;
}

.bubble h3 {
  height: 20px;
  margin: 0 0 9px;
  display: flex;
  align-items: center;
  font-size: 12.800px;
  font-weight: 600;
  color: #27282d;
}

.memo {
  width: 15px;
  height: 15px;
  margin-right: 5px;
}

.bubble ul {
  margin: 0 0 33px;
  padding-left: 33px;
}

.bubble b {
  font-weight: 600;
  color: #3a3b41;
}

.hr-dot {
  position: absolute;
  left: 150px;
  margin-top: -17px;
  width: 1px;
  height: 1px;
  background: #87888f;
}

.recent {
  position: absolute;
  left: 312px;
  top: 466px;
  width: 42px;
  height: 20px;
  border-radius: 10px;
  background: #ececef;
  color: #70727a;
  font-size: 9.500px;
  line-height: 20px;
  text-align: center;
}

.emu-scroll {
  position: absolute;
  right: 0;
  top: 419px;
  width: 4px;
  height: 42px;
  border-radius: 2px;
  background: #b4b6bc;
}

.chat-ring {
  width: 364px;
  height: 51px;
  margin: 22px 0 0 3px;
  padding: 1px;
  border-radius: 9px;
  background: linear-gradient(90deg, #1a9ad6 0, #1a9ad6 15%, #e9f3f9 47%, #fcfcfd 52%);
}

.chat-box {
  position: relative;
  height: 100%;
  padding: 9px 0 0 11px;
  display: flex;
  align-items: flex-start;
  border-radius: 8px;
  background: #fbfbfd;
}

.chat-ico {
  width: 12px;
  height: 12px;
  margin: 1px 4px 0 0;
}

.chat-ph {
  font-size: 10px;
  line-height: 14px;
  color: #8e9097;
}

.chat-send {
  position: absolute;
  right: 21px;
  top: 19px;
  width: 11px;
  height: 11px;
}

/* windows taskbar */

.taskbar {
  height: 28px;
  flex: none;
  display: flex;
  align-items: center;
  background: #1c1c1c;
  color: #e4e4e4;
}

.start {
  width: 32px;
  display: flex;
  justify-content: center;
}

.task-search {
  width: 192px;
  height: 28px;
  display: flex;
  align-items: center;
  padding-left: 7px;
  background: #333;
  border: 1px solid #555;
  border-width: 1px 1px 0;
  font-size: 9.200px;
  color: #d4d4d4;
}

.task-search span {
  margin-left: 5px;
}

.tea {
  margin-left: auto;
  margin-right: 2px;
}

.task-view {
  width: 33px;
  display: flex;
  justify-content: center;
}

.task-app {
  position: relative;
  width: 33px;
  height: 28px;
  display: flex;
  align-items: center;
  justify-content: center;
}

.task-app.run::after {
  content: '';
  position: absolute;
  left: 2px;
  right: 2px;
  bottom: 0;
  height: 1px;
  background: #76b9ed;
}

.active {
  background: #3d3d3d;
}

.task-pill {
  position: absolute;
  right: 5px;
  bottom: 3px;
  width: 10px;
  height: 10px;
  border-radius: 50%;
  font-size: 6px;
  line-height: 10px;
  text-align: center;
  color: #eee;
}

.grey {
  background: #5b6770;
}

.red {
  background: #c8401c;
}

.tray {
  margin-left: auto;
  display: flex;
  align-items: center;
  padding-right: 15px;
  font-size: 8.600px;
}

.weather {
  margin: 0 16px 0 4px;
}

.tray-chev {
  margin-right: 6px;
}

.tray-ico {
  width: 11px;
  height: 11px;
  margin-right: 5px;
}

.clock {
  display: flex;
  flex-direction: column;
  align-items: center;
  width: 45px;
  font-size: 8.500px;
  line-height: 12px;
}

.notif {
  position: relative;
  margin-left: 2px;
}

.notif b {
  position: absolute;
  left: 7px;
  top: 5px;
  width: 11px;
  height: 11px;
  border: 1px solid #aaa;
  border-radius: 50%;
  background: #222;
  font-size: 7px;
  font-weight: 400;
  line-height: 9px;
  text-align: center;
}
```
